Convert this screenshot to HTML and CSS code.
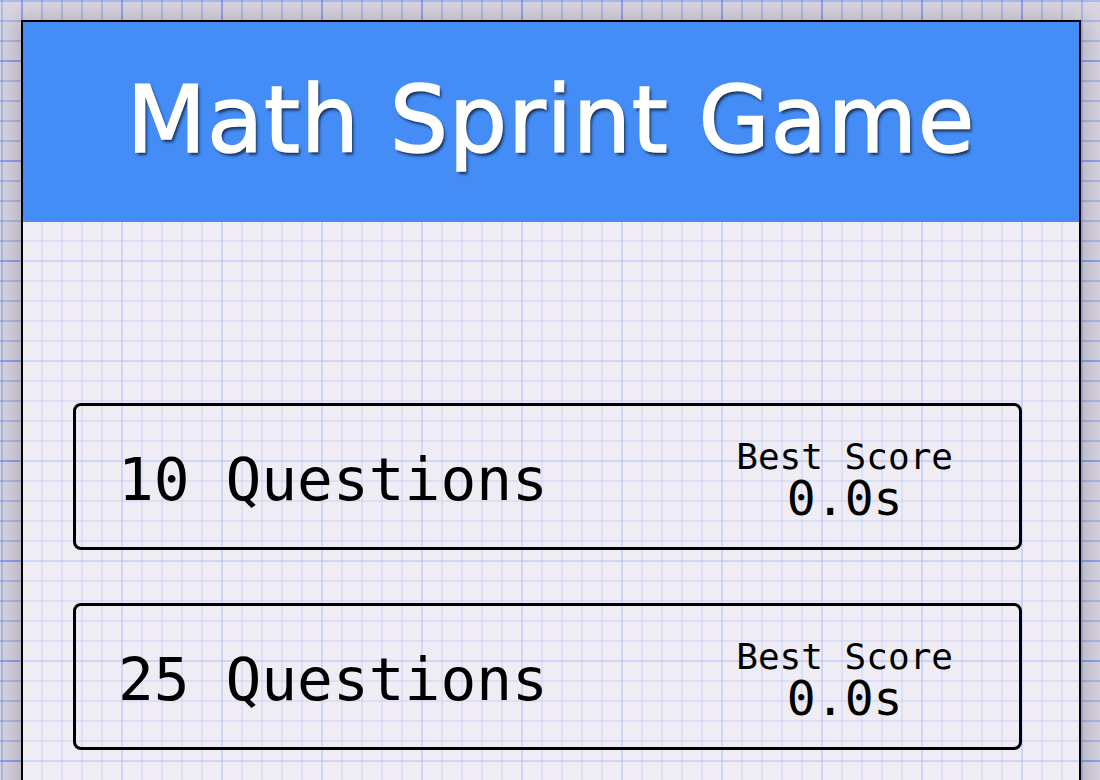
FILE: index.html
```html
<!DOCTYPE html>
<html lang="en">
<head>
<meta charset="utf-8">
<title>Math Sprint Game</title>
<link rel="stylesheet" href="styles.css">
</head>
<body>
  <div class="game-container">
    <div class="header">
      <h1 class="title">Math Sprint Game</h1>
    </div>
    <div class="splash-page">
      <form class="start-form">
        <div class="radio-container">
          <label class="radio-label">10 Questions</label>
          <div class="best-score">
            <span class="best-title">Best Score</span>
            <span class="best-value">0.0s</span>
          </div>
        </div>
        <div class="radio-container">
          <label class="radio-label">25 Questions</label>
          <div class="best-score">
            <span class="best-title">Best Score</span>
            <span class="best-value">0.0s</span>
          </div>
        </div>
        <div class="radio-container">
          <label class="radio-label">50 Questions</label>
          <div class="best-score">
            <span class="best-title">Best Score</span>
            <span class="best-value">0.0s</span>
          </div>
        </div>
      </form>
    </div>
  </div>
</body>
</html>
```

FILE: styles.css
```css
html, body {
  margin: 0;
  padding: 0;
}

body {
  background-color: #dbd7e4;
  background-image:
    linear-gradient(90deg, rgba(80, 120, 255, 0.32) 2px, transparent 2px),
    linear-gradient(rgba(80, 120, 255, 0.32) 2px, transparent 2px),
    linear-gradient(90deg, rgba(88, 126, 242, 0.33) 2px, transparent 2px),
    linear-gradient(rgba(88, 126, 242, 0.33) 2px, transparent 2px);
  background-size: 100px 100px, 100px 100px, 20px 20px, 20px 20px;
  background-position: 21px 0, 0 60px, 1px 0, 0 0;
  font-family: "DejaVu Sans Mono", monospace;
  color: #000;
  overflow: hidden;
  height: 780px;
}

.game-container {
  width: 1056px;
  margin: 20px 0 0 21px;
  border: 2px solid #000;
  background: rgba(255, 255, 255, 0.55);
  box-shadow: 0 4px 26px 6px rgba(0, 0, 0, 0.2);
  min-height: 900px;
}

.header {
  height: 200px;
  background: #448cf6;
  display: flex;
  align-items: center;
  justify-content: center;
}

.title {
  margin: 0;
  font-family: "DejaVu Sans", sans-serif;
  font-weight: normal;
  font-size: 92px;
  letter-spacing: 0.7px;
  color: #fff;
  -webkit-text-stroke: 1.5px #fff;
  text-shadow: 2px 3px 3px rgba(0, 0, 0, 0.65);
  padding-bottom: 4px;
}

.splash-page {
  padding-top: 181px;
}

.start-form {
  display: flex;
  flex-direction: column;
  gap: 53px;
}

.radio-container {
  box-sizing: border-box;
  width: 949px;
  height: 147px;
  margin-left: 50px;
  border: 3px solid #000;
  border-radius: 8px;
  display: flex;
  align-items: center;
  justify-content: space-between;
  padding: 0 66px 0 42px;
}

.radio-label {
  font-size: 59.5px;
  line-height: 1;
  padding-top: 6px;
}

.best-score {
  display: flex;
  flex-direction: column;
  align-items: center;
  padding-top: 6px;
}

.best-title {
  font-size: 36px;
  line-height: 36px;
}

.best-value {
  font-size: 48px;
  line-height: 46px;
}
```
